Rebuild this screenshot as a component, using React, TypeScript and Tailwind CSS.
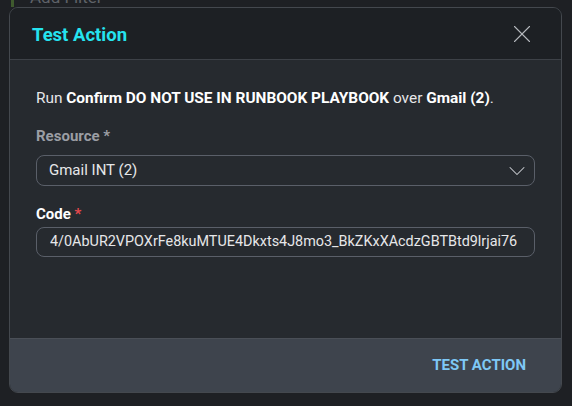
import { X, ChevronDown } from "lucide-react";

export default function App() {
  return (
    <div className="relative h-[406px] w-[572px] overflow-hidden bg-[#1e2024] font-['Roboto',sans-serif]">
      {/* page behind the dialog */}
      <div className="flex h-[7px] overflow-hidden">
        <div className="ml-[11px] h-full w-[3px] bg-[#3f5a2e]" />
        <div className="ml-[16px] -mt-[13px] text-[17px] leading-[20px] text-[#5f6268]">Add Filter</div>
      </div>

      <div className="absolute left-[9px] top-[7px] flex h-[386px] w-[553px] flex-col overflow-hidden rounded-[9px] border border-[#44484e] bg-[#262a2f]">
        <div className="flex h-[52px] shrink-0 items-center justify-between border-b border-[#3d4147] bg-[#1d2024] pl-[22px] pr-[24px]">
          <h2 className="mt-[3px] text-[18.5px] font-bold leading-none text-[#25e3ef]">Test Action</h2>
          <X className="h-[30px] w-[30px] text-[#b3b6bb]" strokeWidth={0.9} />
        </div>

        <div className="flex flex-1 flex-col px-[26px] pt-[28px]">
          <p className="text-[15.4px] leading-[20px] text-[#e6e7e9]">
            Run <span className="font-bold text-white">Confirm DO NOT USE IN RUNBOOK PLAYBOOK</span> over{" "}
            <span className="font-bold text-white">Gmail (2)</span>.
          </p>

          <label className="mt-[18px] text-[15px] font-bold leading-[20px] text-[#9b9ea4]">Resource *</label>
          <div className="mt-[9px] flex h-[31px] items-center justify-between rounded-[8px] border border-[#5a5f69] pl-[12px] pr-[3px]">
            <span className="text-[15px] text-[#e6e7e9]">Gmail INT (2)</span>
            <ChevronDown className="h-[28px] w-[28px] text-[#c9ccd1]" strokeWidth={0.9} />
          </div>

          <label className="mt-[18px] text-[15px] font-bold leading-[20px] text-white">
            Code <span className="text-[#e5484d]">*</span>
          </label>
          <div className="mt-[3px] flex h-[30px] items-center rounded-[8px] border border-[#5a5f69] pl-[13px] pr-[10px]">
            <span className="truncate text-[14.4px] text-[#e6e7e9]">
              4/0AbUR2VPOXrFe8kuMTUE4Dkxts4J8mo3_BkZKxXAcdzGBTBtd9lrjai76
            </span>
          </div>
        </div>

        <div className="flex h-[54px] shrink-0 items-center justify-end border-t border-[#4a4f57] bg-[#3e444d] pr-[27px]">
          <button className="px-2 text-[15px] font-bold uppercase leading-none text-[#7ec8f6]">Test Action</button>
        </div>
      </div>
    </div>
  );
}
